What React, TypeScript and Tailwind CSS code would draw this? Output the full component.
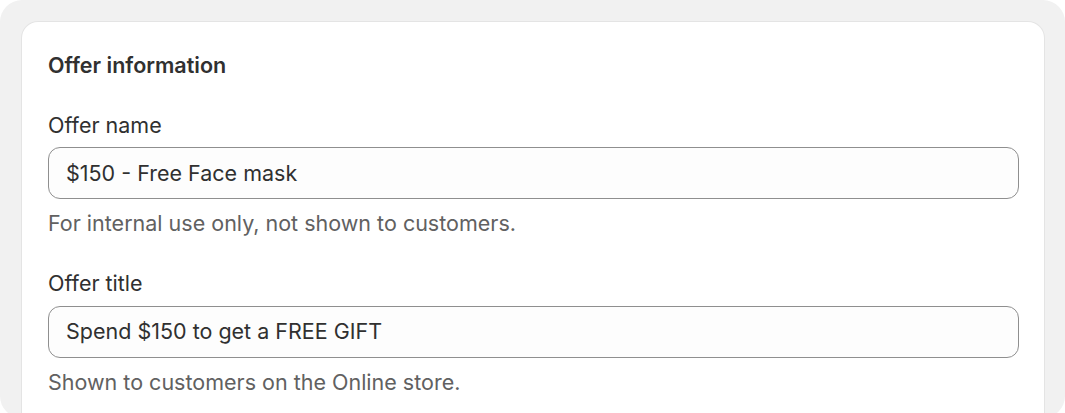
import React from "react";

const font = { fontFamily: "Inter, 'Noto Sans', sans-serif" };

function Field({ label, value, help }: { label: string; value: string; help: string }) {
  return (
    <div className="flex flex-col">
      <div className="text-[21.5px] leading-[28px] text-[#303030]">{label}</div>
      <div className="mt-[8.5px] h-[52px] rounded-[12px] border border-[#8f8f8f] bg-[#fdfdfd] pl-[17px] flex items-center text-[21.5px] text-[#303030]">
        {value}
      </div>
      <div className="mt-[10px] text-[21.5px] leading-[28px] text-[#616161]">{help}</div>
    </div>
  );
}

export default function App() {
  return (
    <div className="h-[413px] w-[1065px] overflow-hidden bg-white" style={font}>
      <div className="h-[418px] w-[1065px] rounded-[22px] bg-[#f1f1f1] pt-[22px] pl-[22px] pr-[21px]">
        <div className="h-[420px] rounded-[16px] bg-white pl-[26px] pr-[25px] pt-[29px] shadow-[0_0_0_1px_rgba(0,0,0,0.05),0_1px_0_0_rgba(0,0,0,0.06)]">
          <div className="text-[21.5px] leading-[28px] font-semibold text-[#303030]">Offer information</div>
          <div className="mt-[31.5px] flex flex-col gap-[32px]">
            <Field label="Offer name" value="$150 - Free Face mask" help="For internal use only, not shown to customers." />
            <Field label="Offer title" value="Spend $150 to get a FREE GIFT" help="Shown to customers on the Online store." />
          </div>
        </div>
      </div>
    </div>
  );
}
